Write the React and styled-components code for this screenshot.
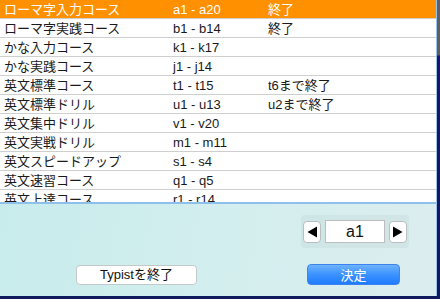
import React from 'react';
import styled, { createGlobalStyle } from 'styled-components';

const GlobalStyle = createGlobalStyle`
  html, body {
    margin: 0;
    padding: 0;
  }
  body {
    width: 440px;
    height: 299px;
    overflow: hidden;
    background: #14205a;
    font-family: "Liberation Sans", "Noto Sans CJK JP", sans-serif;
  }
`;

const courses = [
  { name: 'ローマ字入力コース', range: 'a1 - a20', status: '終了' },
  { name: 'ローマ字実践コース', range: 'b1 - b14', status: '終了' },
  { name: 'かな入力コース', range: 'k1 - k17', status: '' },
  { name: 'かな実践コース', range: 'j1 - j14', status: '' },
  { name: '英文標準コース', range: 't1 - t15', status: 't6まで終了' },
  { name: '英文標準ドリル', range: 'u1 - u13', status: 'u2まで終了' },
  { name: '英文集中ドリル', range: 'v1 - v20', status: '' },
  { name: '英文実戦ドリル', range: 'm1 - m11', status: '' },
  { name: '英文スピードアップ', range: 's1 - s4', status: '' },
  { name: '英文速習コース', range: 'q1 - q5', status: '' },
  { name: '英文上達コース', range: 'r1 - r14', status: '' },
];

const Screen = styled.div`
  display: flex;
  width: 440px;
  height: 299px;
  background: linear-gradient(180deg, #5c5f66 0px, #5c5f66 55px, #16166a 56px, #101a5c 100%);
`;

const Window = styled.div`
  display: flex;
  flex-direction: column;
  width: 436px;
  height: 296px;
  border-right: 1px solid #9cc4e8;
  background: linear-gradient(100deg, #c6ebeb 0%, #d2eeee 50%, #dcedef 100%);
`;

const ListView = styled.div`
  height: 202px;
  overflow: hidden;
  background: #fff;
  border-bottom: 2px solid #8fc0ec;
  flex-shrink: 0;
`;

const Row = styled.div`
  display: grid;
  grid-template-columns: 169px 95px 1fr;
  height: 18px;
  border-bottom: 1px solid #cfcfcf;
  background: ${(p) => (p.$selected ? '#ff9000' : '#fff')};
  color: ${(p) => (p.$selected ? '#fff' : '#1a1a1a')};
  font-size: 13px;
  line-height: 19px;
`;

const Cell = styled.div`
  padding-left: 4px;
  white-space: nowrap;
  overflow: hidden;
`;

const Footer = styled.div`
  flex: 1;
  display: flex;
  flex-direction: column;
  padding-top: 11px;
`;

const StepperRow = styled.div`
  display: flex;
  justify-content: flex-end;
  padding-right: 27px;
`;

const StepperGroup = styled.div`
  display: flex;
  align-items: center;
  gap: 4px;
  padding: 5px 2px;
  border-radius: 4px;
  background: rgba(120, 140, 140, 0.08);
`;

const ArrowButton = styled.button`
  width: 18px;
  height: 22px;
  padding: 0;
  display: flex;
  align-items: center;
  justify-content: center;
  background: #fff;
  border: 1px solid #b9bfc0;
  border-radius: 4px;
`;

const Field = styled.div`
  width: 58px;
  height: 21px;
  border: 1px solid #bdbdbd;
  background: #fff;
  font-size: 16px;
  line-height: 21px;
  text-align: center;
  color: #111;
`;

const ButtonRow = styled.div`
  display: flex;
  justify-content: space-between;
  align-items: center;
  padding: 0 36px 0 76px;
  margin-top: 16px;
`;

const PlainButton = styled.button`
  width: 121px;
  height: 20px;
  padding: 0;
  background: #fff;
  border: 1px solid #c3c9ca;
  border-radius: 4px;
  font-family: "Liberation Sans", "Noto Sans CJK JP", sans-serif;
  font-size: 13px;
  line-height: 18px;
  color: #111;
`;

const PrimaryButton = styled.button`
  width: 93px;
  height: 21px;
  padding: 0;
  background: linear-gradient(180deg, #6cb3ff 0%, #3c92ff 50%, #1f7cff 100%);
  border: 1px solid #3c82f0;
  border-radius: 4px;
  font-family: "Noto Sans CJK JP", sans-serif;
  font-size: 13px;
  line-height: 19px;
  color: #fff;
`;

function Triangle({ dir }) {
  return (
    <svg width="10" height="12" viewBox="0 0 10 12">
      {dir === 'left' ? (
        <polygon points="10,0.5 10,11.5 0.5,6" fill="#000" />
      ) : (
        <polygon points="0,0.5 0,11.5 9.5,6" fill="#000" />
      )}
    </svg>
  );
}

export default function App() {
  return (
    <>
      <GlobalStyle />
      <Screen>
        <Window>
          <ListView>
            {courses.map((c, i) => (
              <Row key={c.range} $selected={i === 0}>
                <Cell>{c.name}</Cell>
                <Cell>{c.range}</Cell>
                <Cell>{c.status}</Cell>
              </Row>
            ))}
          </ListView>
          <Footer>
            <StepperRow>
              <StepperGroup>
                <ArrowButton>
                  <Triangle dir="left" />
                </ArrowButton>
                <Field>a1</Field>
                <ArrowButton>
                  <Triangle dir="right" />
                </ArrowButton>
              </StepperGroup>
            </StepperRow>
            <ButtonRow>
              <PlainButton>Typistを終了</PlainButton>
              <PrimaryButton>決定</PrimaryButton>
            </ButtonRow>
          </Footer>
        </Window>
      </Screen>
    </>
  );
}
